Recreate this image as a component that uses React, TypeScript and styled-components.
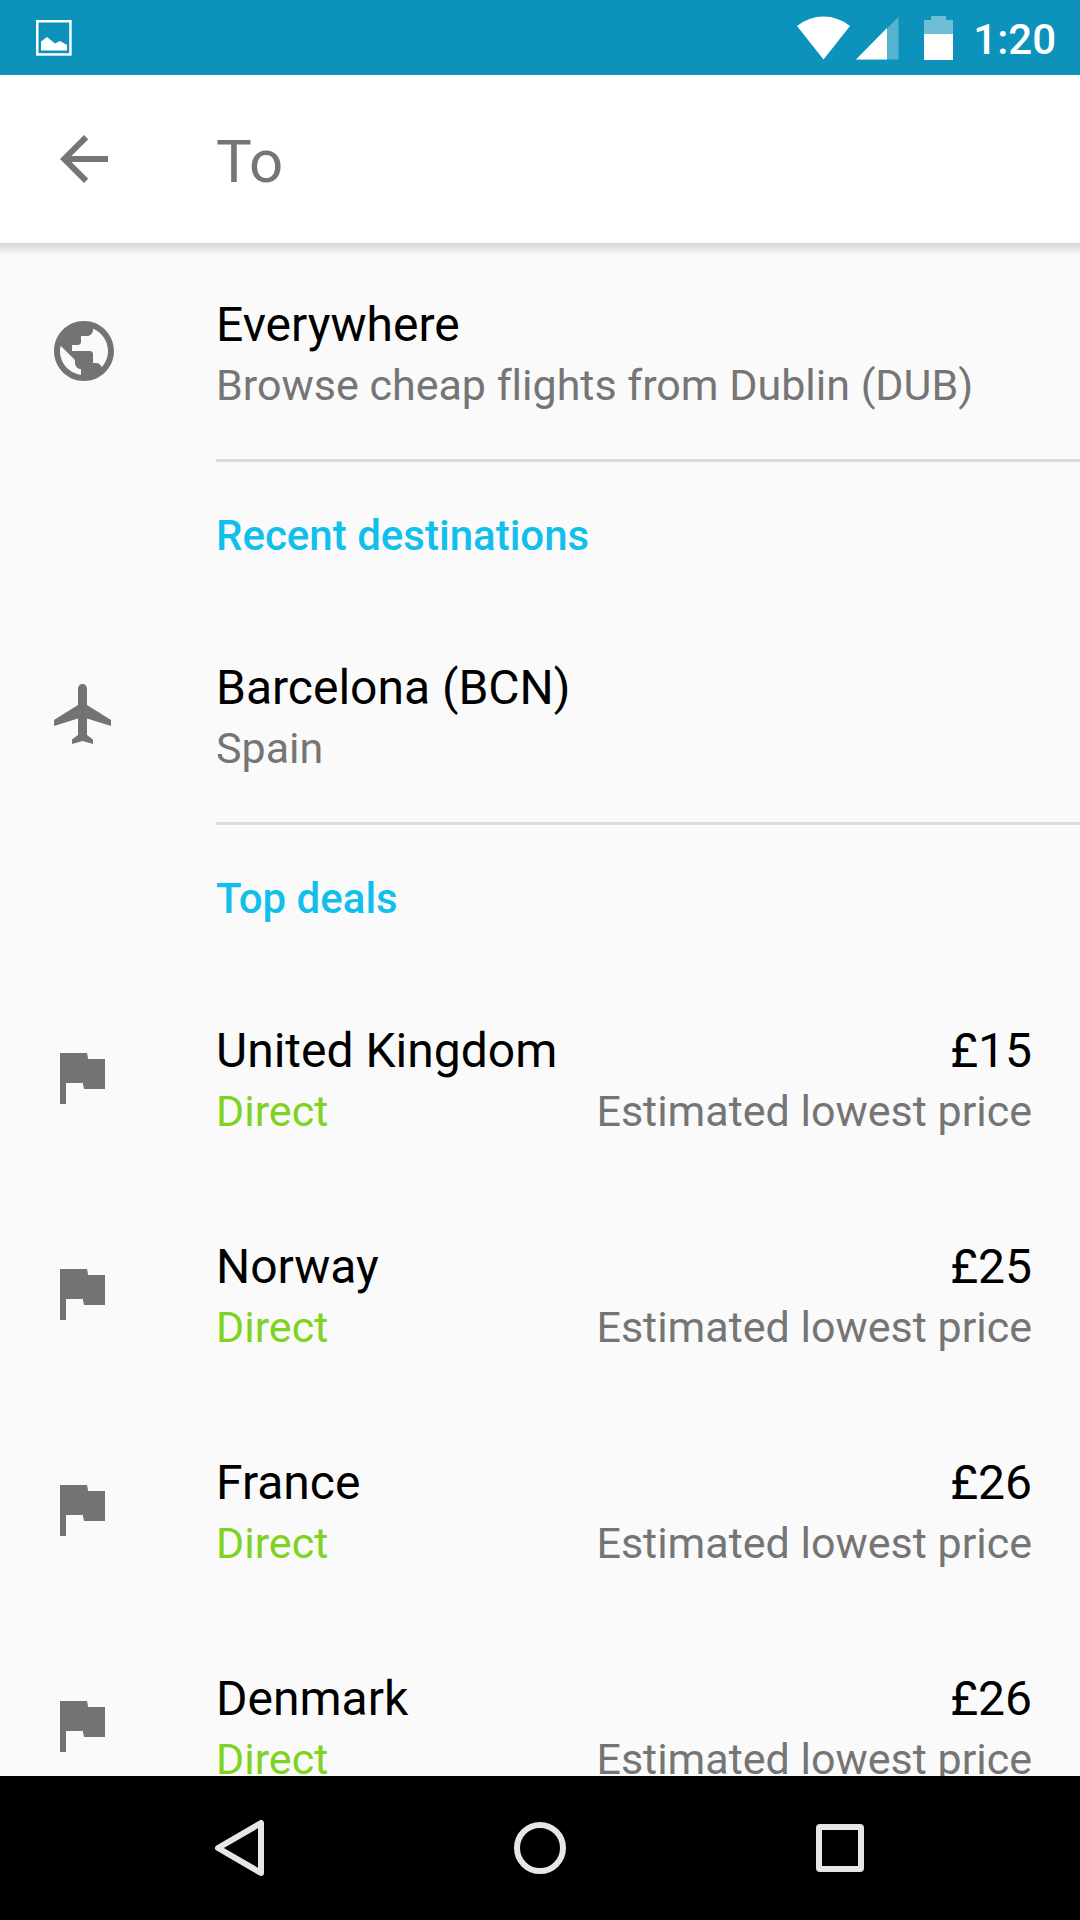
import React from "react";
import styled, { createGlobalStyle } from "styled-components";

const GlobalStyle = createGlobalStyle`
  *, *::before, *::after { box-sizing: border-box; }
  body { margin: 0; background: #fafafa; }
  button, input { font: inherit; border: 0; padding: 0; background: none; color: inherit; }
  h2, p, ul { margin: 0; padding: 0; }
`;

const Screen = styled.div`
  display: flex;
  flex-direction: column;
  height: 100vh;
  background: #fafafa;
  font-family: Roboto, "Noto Sans", sans-serif;
  font-variant-ligatures: none;
`;

const StatusBar = styled.div`
  flex: none;
  display: flex;
  align-items: center;
  height: 75px;
  padding: 0 24px 0 36px;
  background: #0d93bb;
  color: #fff;
`;

const StatusIcons = styled.div`
  display: flex;
  align-items: center;
  margin-left: auto;
`;

const StatusGlyph = styled.svg<{ $gap: number }>`
  display: block;
  margin-right: ${(p) => p.$gap}px;
`;

const Clock = styled.time`
  font-size: 42px;
  line-height: 50px;
  font-weight: 500;
  padding-top: 5px;
`;

const Toolbar = styled.header`
  flex: none;
  position: relative;
  z-index: 1;
  display: flex;
  align-items: center;
  height: 168px;
  padding: 0 48px;
  background: #fff;

  &::after {
    content: "";
    position: absolute;
    top: 100%;
    left: 0;
    right: 0;
    height: 12px;
    background: linear-gradient(rgba(0, 0, 0, 0.14), rgba(0, 0, 0, 0));
    pointer-events: none;
  }
`;

const BackButton = styled.button`
  flex: none;
  width: 72px;
  height: 72px;
  margin-right: 96px;
  color: #757575;
`;

const SearchInput = styled.input`
  flex: 1;
  min-width: 0;
  font-size: 60px;
  line-height: 72px;
  height: 76px;
  padding-top: 4px;
  color: #000;
  outline: none;

  &::placeholder {
    color: #757575;
    opacity: 1;
  }
`;

const Content = styled.main`
  flex: 1;
  min-height: 0;
  overflow-y: auto;
  scrollbar-width: none;
`;

const SectionTitle = styled.h2`
  margin-left: 216px;
  padding: 49px 48px 45px 0;
  border-top: 3px solid #dcdcdc;
  font-size: 42px;
  line-height: 50px;
  font-weight: 500;
  color: #10bfeb;
`;

const List = styled.ul`
  list-style: none;
`;

const Row = styled.button`
  display: flex;
  align-items: center;
  gap: 96px;
  width: 100%;
  height: 216px;
  padding: 4px 48px 0;
  text-align: left;
`;

const RowIcon = styled.svg`
  flex: none;
  display: block;
  width: 72px;
  height: 72px;
  margin-bottom: 4px;
  fill: #737373;
`;

const RowBody = styled.span`
  flex: 1;
  min-width: 0;
  display: flex;
  flex-direction: column;
  gap: 8px;
`;

const Line = styled.span`
  display: flex;
  justify-content: space-between;
  white-space: nowrap;
`;

const Title = styled.span`
  font-size: 48px;
  line-height: 56px;
  color: #000;
`;

const Detail = styled.span<{ $direct?: boolean }>`
  font-size: 43px;
  line-height: 48px;
  color: ${(p) => (p.$direct ? "#7ed321" : "#757575")};
`;

const NavBar = styled.nav`
  flex: none;
  display: grid;
  grid-template-columns: repeat(3, 300px);
  justify-content: center;
  height: 144px;
  background: #000;
`;

const NavButton = styled.button`
  display: flex;
  align-items: center;
  justify-content: center;
`;

const NavGlyph = styled.svg`
  width: 72px;
  height: 72px;
  fill: none;
  stroke: #e6e6e6;
  stroke-width: 6;
  stroke-linejoin: round;
`;

const icons = {
  globe:
    "M12 2C6.48 2 2 6.48 2 12s4.48 10 10 10 10-4.48 10-10S17.52 2 12 2zm-1 17.93c-3.95-.49-7-3.85-7-7.93 0-.62.08-1.21.21-1.79L9 15v1c0 1.1.9 2 2 2v1.93zm6.9-2.54c-.26-.81-1-1.39-1.9-1.39h-1v-3c0-.55-.45-1-1-1H8v-2h2c.55 0 1-.45 1-1V7h2c1.1 0 2-.9 2-2v-.41c2.93 1.19 5 4.06 5 7.41 0 2.08-.8 3.97-2.1 5.39z",
  plane:
    "M21 16v-2l-8-5V3.5c0-.83-.67-1.5-1.5-1.5S10 2.67 10 3.5V9l-8 5v2l8-2.5V19l-2 1.5V22l3.5-1 3.5 1v-1.5L13 19v-5.5l8 2.5z",
  flag: "M13.4 6L13 4H4v17h2v-7h5.6l.4 2h7V6z",
  back: "M20 11H7.83l5.59-5.59L12 4l-8 8 8 8 1.41-1.41L7.83 13H20v-2z",
};

type PlaceProps = {
  icon: keyof typeof icons;
  name: string;
  detail: string;
  price?: string;
};

function Place({ icon, name, detail, price }: PlaceProps) {
  return (
    <li>
      <Row type="button">
        <RowIcon viewBox="0 0 24 24" aria-hidden="true">
          <path d={icons[icon]} />
        </RowIcon>
        <RowBody>
          <Line>
            <Title>{name}</Title>
            {price && <Title>{price}</Title>}
          </Line>
          <Line>
            <Detail $direct={Boolean(price)}>{detail}</Detail>
            {price && <Detail>Estimated lowest price</Detail>}
          </Line>
        </RowBody>
      </Row>
    </li>
  );
}

const deals = [
  { name: "United Kingdom", price: "£15" },
  { name: "Norway", price: "£25" },
  { name: "France", price: "£26" },
  { name: "Denmark", price: "£26" },
];

export default function App() {
  return (
    <Screen>
      <GlobalStyle />
      <StatusBar>
        <svg width="36" height="36" viewBox="0 0 36 36" aria-hidden="true">
          <rect x="1.25" y="1.25" width="33.2" height="33.2" fill="none" stroke="#fff" strokeWidth="2.5" />
          <path d="M5 21.5L11 17l8 6.5 5-2.5 7 4v5.5H5z" fill="#fff" />
        </svg>
        <StatusIcons>
          <StatusGlyph $gap={5} width="54" height="44" viewBox="0 0 54 44" aria-hidden="true">
            <path d="M0 10Q12 .5 26.5 .5T53 10L26.5 43.5z" fill="#fff" />
          </StatusGlyph>
          <StatusGlyph $gap={25} width="43" height="44" viewBox="0 0 43 44" aria-hidden="true">
            <path d="M42.5 1v42.5H0z" fill="#fff" opacity=".3" />
            <path d="M31 12v31.5H0z" fill="#fff" />
          </StatusGlyph>
          <StatusGlyph $gap={20} width="29" height="44" viewBox="0 0 29 44" aria-hidden="true">
            <path d="M0 4h7V0h15v4h7v14H0z" fill="#fff" opacity=".4" />
            <path d="M0 18h29v26H0z" fill="#fff" />
          </StatusGlyph>
          <Clock>1:20</Clock>
        </StatusIcons>
      </StatusBar>

      <Toolbar>
        <BackButton type="button" aria-label="Back">
          <svg width="72" height="72" viewBox="0 0 24 24" fill="currentColor" display="block">
            <path d={icons.back} />
          </svg>
        </BackButton>
        <SearchInput type="text" placeholder="To" aria-label="To" />
      </Toolbar>

      <Content>
        <section>
          <List>
            <Place icon="globe" name="Everywhere" detail="Browse cheap flights from Dublin (DUB)" />
          </List>
        </section>
        <section>
          <SectionTitle>Recent destinations</SectionTitle>
          <List>
            <Place icon="plane" name="Barcelona (BCN)" detail="Spain" />
          </List>
        </section>
        <section>
          <SectionTitle>Top deals</SectionTitle>
          <List>
            {deals.map((deal) => (
              <Place key={deal.name} icon="flag" name={deal.name} detail="Direct" price={deal.price} />
            ))}
          </List>
        </section>
      </Content>

      <NavBar aria-label="System">
        <NavButton type="button" aria-label="Back">
          <NavGlyph viewBox="0 0 72 72">
            <path d="M14 36L57 11V61z" />
          </NavGlyph>
        </NavButton>
        <NavButton type="button" aria-label="Home">
          <NavGlyph viewBox="0 0 72 72">
            <circle cx="36" cy="36" r="23" />
          </NavGlyph>
        </NavButton>
        <NavButton type="button" aria-label="Recent apps">
          <NavGlyph viewBox="0 0 72 72">
            <rect x="15" y="15" width="42" height="42" rx="1" />
          </NavGlyph>
        </NavButton>
      </NavBar>
    </Screen>
  );
}
